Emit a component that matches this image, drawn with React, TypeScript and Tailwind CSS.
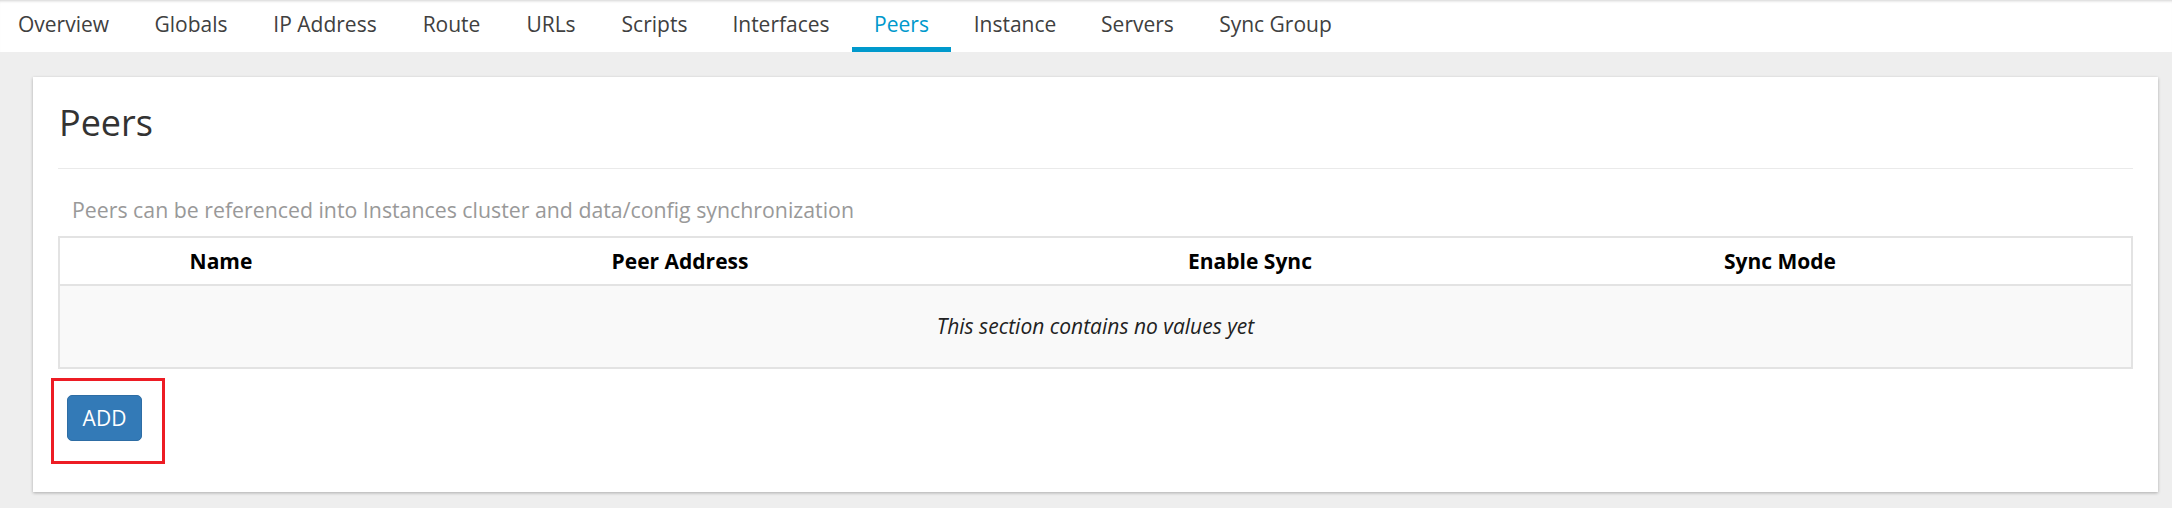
import React from 'react';

const tabs = [
  { label: 'Overview', w: 'w-[137px]' },
  { label: 'Globals', w: 'w-[118px]' },
  { label: 'IP Address', w: 'w-[150px]' },
  { label: 'Route', w: 'w-[103px]' },
  { label: 'URLs', w: 'w-[96px]' },
  { label: 'Scripts', w: 'w-[111px]' },
  { label: 'Interfaces', w: 'w-[142px]' },
  { label: 'Peers', w: 'w-[99px]', active: true },
  { label: 'Instance', w: 'w-[128px]' },
  { label: 'Servers', w: 'w-[117px]' },
  { label: 'Sync Group', w: 'w-[159px]' },
];

const columns = [
  { label: 'Name', w: 'w-[322px]' },
  { label: 'Peer Address', w: 'w-[596px]' },
  { label: 'Enable Sync', w: 'w-[544px]' },
  { label: 'Sync Mode', w: 'w-[516px]' },
  { label: '', w: 'flex-1' },
];

const App: React.FC = () => {
  return (
    <div className="min-h-[508px] w-full bg-[#eeeeee] font-['Open_Sans',sans-serif] text-[#333]">
      {/* tab bar */}
      <nav className="h-[52px] bg-white shadow-[inset_0_3px_3px_-2px_rgba(0,0,0,0.18)] overflow-hidden">
        <ul className="flex h-full -ml-[5px]">
          {tabs.map((t) => (
            <li
              key={t.label}
              className={`${t.w} h-full flex items-center justify-center border-b-[5px] pt-[2px] text-[21px] leading-none whitespace-nowrap ${
                t.active ? 'border-[#0099cc] text-[#0099cc]' : 'border-transparent text-[#404040]'
              }`}
            >
              {t.label}
            </li>
          ))}
        </ul>
      </nav>

      <div className="pt-[25px] pl-[33px] pr-[14px] pb-[17px]">
        <div className="bg-white shadow-[0_1px_3px_rgba(0,0,0,0.28)] px-[25px] pt-[25px] pb-[51px]">
          <h2 className="text-[36px] leading-[41px] font-normal text-[#333] pl-[1px]">Peers</h2>
          <div className="mt-[25px] h-px bg-[#eaeaea]" />

          <p className="mt-[26px] pl-[14px] text-[21.3px] leading-[30px] text-[#999]">
            Peers can be referenced into Instances cluster and data/config synchronization
          </p>

          <div className="mt-[11px] border-[2px] border-[#e3e3e3]">
            <div className="flex h-[48px] items-center border-b-[2px] border-[#e3e3e3] bg-white">
              {columns.map((c, i) => (
                <div key={i} className={`${c.w} text-center text-[21px] font-bold text-black leading-none`}>
                  {c.label}
                </div>
              ))}
            </div>
            <div className="flex h-[81px] items-center justify-center bg-[#f9f9f9]">
              <em className="text-[21px] italic text-[#222]">This section contains no values yet</em>
            </div>
          </div>

          <div className="relative mt-[26px] ml-[9px] w-[75px]">
            <button className="h-[46px] w-[75px] rounded-[5px] bg-[#337ab7] border border-[#2e6da4] text-white text-[21px] leading-none">
              ADD
            </button>
            <div className="absolute -left-[16px] -top-[17px] w-[114px] h-[86px] border-[3px] border-[#ed1c24] pointer-events-none" />
          </div>
        </div>
      </div>
    </div>
  );
};

export default App;
